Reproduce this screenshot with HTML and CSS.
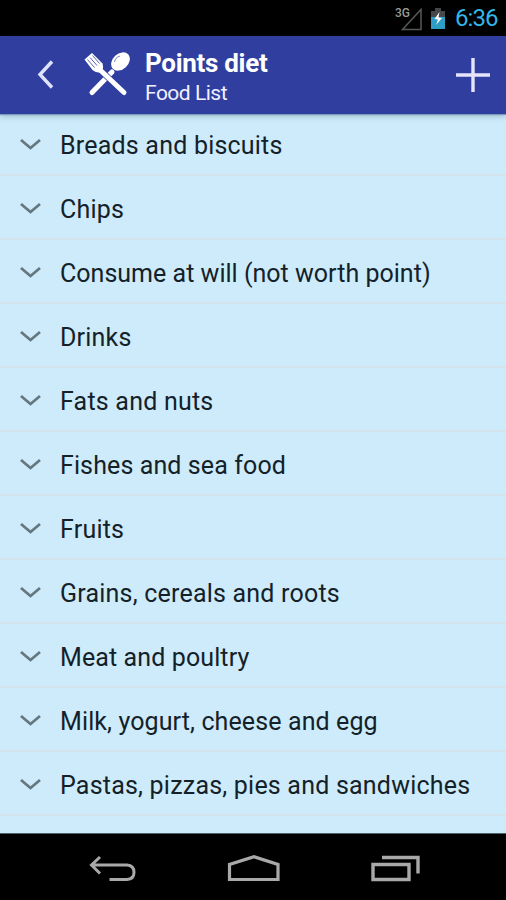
FILE: index.html
```html
<!DOCTYPE html>
<html lang="en">
<head>
<meta charset="utf-8">
<title>Points diet</title>
<link rel="stylesheet" href="styles.css">
</head>
<body>
<div class="screen">
  <div class="status">
    <svg class="signal" width="28" height="26" viewBox="0 0 28 26"><path d="M26 3.500V23.500H7.500Z" fill="none" stroke="#55585a" stroke-width="1.500"/><text class="net" x="0" y="11">3G</text></svg>
    <svg class="battery" width="16" height="22" viewBox="0 0 16 22"><path d="M5 0h6v3h4v8H1V3h4z" fill="#454749"/><path d="M1 9h14v12H1z" fill="#2d9dc6"/><path d="M9.500 4 4.500 11l3.500.5L6 17l6-7-3.500-.5z" fill="#fff"/></svg>
    <span class="clock">6:36</span>
  </div>
  <header class="bar">
    <svg class="back" width="20" height="32" viewBox="0 0 20 32"><path d="M17 2.500 5 15.500 17 28.500" fill="none" stroke="#dfe2fb" stroke-width="3.400"/></svg>
    <svg class="logo" width="48" height="46" viewBox="0 0 48 46">
      <path d="M9 40.500 29 20" stroke="#fff" stroke-width="5" stroke-linecap="round"/>
      <path d="M15 16 41 40.500" stroke="#303f9f" stroke-width="6.500"/>
      <path d="M15 16 41 40.500" stroke="#fff" stroke-width="5" stroke-linecap="round"/>
      <ellipse cx="37.500" cy="9.500" rx="10.500" ry="7.800" transform="rotate(-43 37.500 9.500)" fill="#fff"/>
      <path d="M31.500 10Q32 5.500 37 4" fill="none" stroke="#7d88c8" stroke-width="1"/>
      <path d="M1.500 7.500 9 1 19.500 11.500Q21 16 18.500 19.500 14 22 9.500 18Z" fill="#fff"/>
      <path d="m4.500 7.500 7 8M7 5.500l7 8M9.500 3.500l7 8" stroke="#5966b5" stroke-width="1"/>
    </svg>
    <div class="titles"><div class="title">Points diet</div><div class="subtitle">Food List</div></div>
    <svg class="add" width="34" height="34" viewBox="0 0 34 34"><path d="M0 17h34M17 0v34" stroke="#e6e4fb" stroke-width="3.400"/></svg>
  </header>
  <main class="list">
    <div class="row"><svg class="chev" width="22" height="14" viewBox="0 0 22 14"><path d="M1 2 10.500 10 20 2"/></svg><span>Breads and biscuits</span></div>
    <div class="row"><svg class="chev" width="22" height="14" viewBox="0 0 22 14"><path d="M1 2 10.500 10 20 2"/></svg><span>Chips</span></div>
    <div class="row"><svg class="chev" width="22" height="14" viewBox="0 0 22 14"><path d="M1 2 10.500 10 20 2"/></svg><span class="tight">Consume at will (not worth point)</span></div>
    <div class="row"><svg class="chev" width="22" height="14" viewBox="0 0 22 14"><path d="M1 2 10.500 10 20 2"/></svg><span>Drinks</span></div>
    <div class="row"><svg class="chev" width="22" height="14" viewBox="0 0 22 14"><path d="M1 2 10.500 10 20 2"/></svg><span>Fats and nuts</span></div>
    <div class="row"><svg class="chev" width="22" height="14" viewBox="0 0 22 14"><path d="M1 2 10.500 10 20 2"/></svg><span class="snug">Fishes and sea food</span></div>
    <div class="row"><svg class="chev" width="22" height="14" viewBox="0 0 22 14"><path d="M1 2 10.500 10 20 2"/></svg><span>Fruits</span></div>
    <div class="row"><svg class="chev" width="22" height="14" viewBox="0 0 22 14"><path d="M1 2 10.500 10 20 2"/></svg><span>Grains, cereals and roots</span></div>
    <div class="row"><svg class="chev" width="22" height="14" viewBox="0 0 22 14"><path d="M1 2 10.500 10 20 2"/></svg><span class="snug">Meat and poultry</span></div>
    <div class="row"><svg class="chev" width="22" height="14" viewBox="0 0 22 14"><path d="M1 2 10.500 10 20 2"/></svg><span class="snug">Milk, yogurt, cheese and egg</span></div>
    <div class="row"><svg class="chev" width="22" height="14" viewBox="0 0 22 14"><path d="M1 2 10.500 10 20 2"/></svg><span>Pastas, pizzas, pies and sandwiches</span></div>
  </main>
  <nav class="nav">
    <svg width="48" height="30" viewBox="0 0 48 30"><path d="M11 2 2.500 10 11 18.500M3 10H38Q45 10.500 45 17.300T38 24.500H20.500" fill="none" stroke="#a9a9a9" stroke-width="3"/></svg>
    <svg width="54" height="30" viewBox="0 0 54 30"><path d="M2.500 24.500V9.500L27 1.700 51 9.500V24.500Z" fill="none" stroke="#a9a9a9" stroke-width="3.200"/></svg>
    <svg width="50" height="30" viewBox="0 0 50 30"><path d="M2 9.500H38V24.500H2ZM11 2.500H47V18.500" fill="none" stroke="#a9a9a9" stroke-width="3.400"/></svg>
  </nav>
</div>
</body>
</html>
```
FILE: styles.css
```css
body { margin: 0; background: #000; font-family: Roboto, sans-serif; }
svg { display: block; flex: none; }
.screen { width: 506px; height: 900px; display: flex; flex-direction: column; overflow: hidden; }
.status { height: 36px; flex: none; box-sizing: border-box; display: flex; justify-content: flex-end; align-items: center; padding-right: 8px; background: #000; }
.signal { margin: 1px 7px 0 0; }
.net { font-size: 12px; font-weight: 500; fill: #97999a; }
.battery { margin: 2px 9px 0 0; }
.clock { color: #33b5e5; font-size: 24px; line-height: 36px; width: 43px; white-space: nowrap; letter-spacing: -0.9px; }
.bar { height: 78px; flex: none; box-sizing: border-box; display: flex; align-items: center; background: #303f9f; padding: 0 16px 0 35px; z-index: 1; box-shadow: 0 1px 1px #7b9dbd, 0 2px 6px rgba(40, 70, 80, .3); }
.back { margin-right: 28px; }
.logo { margin-right: 14px; }
.titles { flex: 1; color: #fff; white-space: nowrap; padding-top: 4px; }
.title { font-size: 26px; font-weight: 700; line-height: 32px; letter-spacing: -.3px; }
.subtitle { font-size: 21px; line-height: 28px; color: #f0f1ff; letter-spacing: -.5px; }
.list { flex: 1; overflow: hidden; background: #cdebfb; }
.row { height: 64px; box-sizing: border-box; display: flex; align-items: center; gap: 18px; padding: 4px 0 0 20px; border-bottom: 2px solid #d4e3ec; color: #142129; font-size: 25px; letter-spacing: .21px; white-space: nowrap; }
.row:first-child { height: 62px; padding-top: 2px; }
.snug { letter-spacing: .11px; }
.tight { letter-spacing: .02px; }
.chev { fill: none; stroke: #65777f; stroke-width: 2.8; }
.nav { height: 67px; flex: none; box-sizing: border-box; border-top: 1px solid #52616a; background: #000; display: flex; align-items: flex-start; padding: 21px 0 0 89px; gap: 90px; }
```
